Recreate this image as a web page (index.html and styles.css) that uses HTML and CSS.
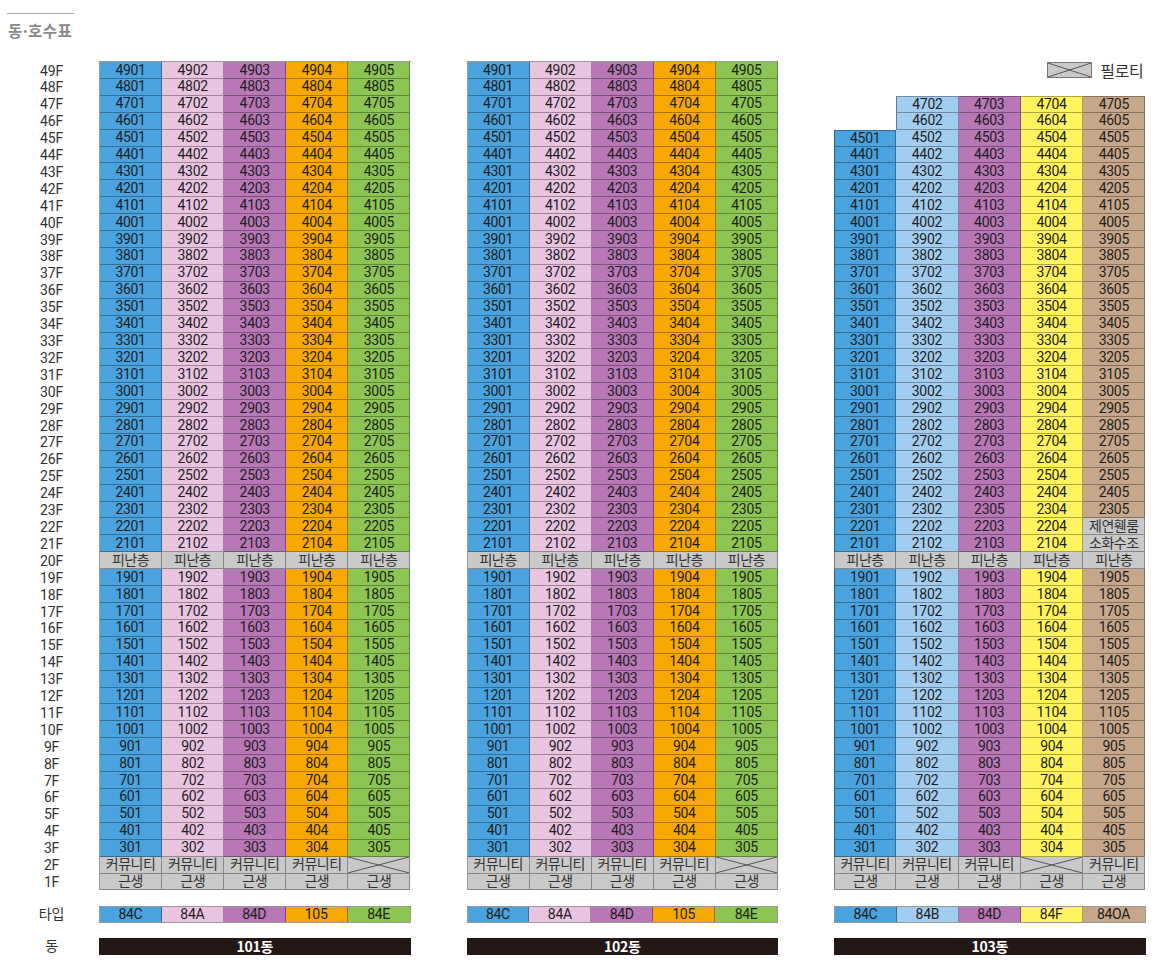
FILE: index.html
```html
<!DOCTYPE html>
<html lang="ko">
<head>
<meta charset="utf-8">
<title>동·호수표</title>
<link rel="stylesheet" href="styles.css">
</head>
<body>
<header class="title">
  <span class="rule"></span>
  <h1>동·호수표</h1>
</header>
<main class="chart">
  <section class="band floors">
    <div class="labels" id="floor-labels"></div>
    <div class="col bldg framed" id="b101"></div>
    <div class="col bldg framed" id="b102"></div>
    <div class="col bldg" id="b103"></div>
  </section>
  <section class="band types">
    <div class="label">타입</div>
    <div class="col strip">
      <div class="tcell blue">84C</div><div class="tcell pink">84A</div><div class="tcell purple">84D</div><div class="tcell orange">105</div><div class="tcell green">84E</div>
    </div>
    <div class="col strip">
      <div class="tcell blue">84C</div><div class="tcell pink">84A</div><div class="tcell purple">84D</div><div class="tcell orange">105</div><div class="tcell green">84E</div>
    </div>
    <div class="col strip">
      <div class="tcell blue">84C</div><div class="tcell sky">84B</div><div class="tcell purple">84D</div><div class="tcell yellow">84F</div><div class="tcell tan">84OA</div>
    </div>
  </section>
  <section class="band dongs">
    <div class="label">동</div>
    <div class="col dong">101동</div>
    <div class="col dong">102동</div>
    <div class="col dong">103동</div>
  </section>
</main>
<script src="script.js"></script>
</body>
</html>
```

FILE: styles.css
```css
* { box-sizing: border-box; }
html, body { margin: 0; padding: 0; background: #fff; }
body {
  width: 1160px;
  height: 960px;
  font-family: "Noto Sans CJK KR", "Noto Sans", sans-serif;
  color: #222;
  overflow: hidden;
}
.title {
  height: 61px;
  padding: 13px 0 0 7px;
}
.rule {
  display: block;
  width: 67px;
  height: 1px;
  background: #a8a8a8;
}
.title h1 {
  margin: 6px 0 0 1px;
  font-size: 15.5px;
  line-height: 20px;
  font-weight: 700;
  color: #8a8a8a;
  letter-spacing: 0.4px;
}
.band {
  display: flex;
  align-items: flex-start;
}
.labels, .label {
  width: 99px;
  flex: none;
}
.col {
  width: 311.5px;
  flex: none;
}
.col + .col { margin-left: 56px; }
.labels {
  display: grid;
  grid-template-rows: repeat(49, 16.92px);
  padding-top: 1.5px;
}
.lab, .label {
  font-family: Roboto, "Noto Sans CJK KR", sans-serif;
  font-size: 14px;
  line-height: 16.92px;
  text-align: center;
  padding-left: 4px;
  color: #333;
  letter-spacing: -0.2px;
}
.bldg {
  display: grid;
  grid-template-columns: repeat(5, 1fr);
  grid-template-rows: repeat(49, 16.92px);
}
.bldg.framed {
  border-top: 1px solid rgba(0,0,0,0.4);
  border-left: 1px solid rgba(0,0,0,0.4);
}
#b103 { padding-top: 1px; }
.cell {
  position: relative;
  padding-top: 0.5px;
  border-right: 1px solid rgba(0,0,0,0.32);
  border-bottom: 1px solid rgba(0,0,0,0.32);
  font-family: Roboto, "Noto Sans CJK KR", sans-serif;
  font-size: 14px;
  line-height: 15.4px;
  text-align: center;
  letter-spacing: -0.3px;
  color: #1e1e1e;
  white-space: nowrap;
}
.cell.t { border-top: 1px solid rgba(0,0,0,0.32); }
.cell.l { border-left: 1px solid rgba(0,0,0,0.4); }
.cell.empty { border: 0; background: transparent; }
.blue { background: #4aa3de; }
.pink { background: #e9c4e1; }
.purple { background: #b877b6; }
.orange { background: #f8a800; }
.green { background: #8cc553; }
.sky { background: #a3cdf0; }
.yellow { background: #fff45e; }
.tan { background: #c7a78b; }
.gray { background: #c9c9c9; color: #333; letter-spacing: -0.5px; }
.xmark {
  position: absolute;
  inset: 0;
  width: 100%;
  height: 100%;
}
.xmark line { stroke: #555; stroke-width: 1; }
.legend {
  grid-column: 1 / -1;
  justify-self: end;
  display: flex;
  align-items: center;
  gap: 8px;
  margin-right: 2px;
}
.legend-box {
  position: relative;
  width: 45px;
  height: 16px;
  background: #c9c9c9;
  border: 1px solid #777;
}
.legend-text {
  font-size: 16px;
  line-height: 17px;
  color: #333;
  letter-spacing: -0.3px;
}
.types { margin-top: 15px; }
.strip {
  display: grid;
  grid-template-columns: repeat(5, 1fr);
  border: 1px solid rgba(0,0,0,0.4);
  height: 17px;
}
.tcell {
  border-right: 1px solid rgba(0,0,0,0.32);
  font-family: Roboto, "Noto Sans CJK KR", sans-serif;
  font-size: 14px;
  line-height: 15.5px;
  text-align: center;
  letter-spacing: -0.3px;
  color: #1e1e1e;
}
.tcell:last-child { border-right: 0; }
.types .label { line-height: 17px; }
.dongs { margin-top: 15px; }
.dongs .label { line-height: 17px; }
.dong {
  height: 17px;
  background: #231815;
  color: #fff;
  font-size: 14px;
  font-weight: 700;
  line-height: 17px;
  text-align: center;
  letter-spacing: -0.3px;
}
```

FILE: script.js
```js
(function () {
  var XSVG = '<svg class="xmark" viewBox="0 0 100 100" preserveAspectRatio="none"><line x1="0" y1="0" x2="100" y2="100" vector-effect="non-scaling-stroke"/><line x1="0" y1="100" x2="100" y2="0" vector-effect="non-scaling-stroke"/></svg>';
  var palettes = {
    b101: ['blue', 'pink', 'purple', 'orange', 'green'],
    b102: ['blue', 'pink', 'purple', 'orange', 'green'],
    b103: ['blue', 'sky', 'purple', 'yellow', 'tan']
  };

  var labels = document.getElementById('floor-labels');
  for (var f = 49; f >= 1; f--) {
    var d = document.createElement('div');
    d.className = 'lab';
    d.textContent = f + 'F';
    labels.appendChild(d);
  }

  function cell(cls, text) {
    var c = document.createElement('div');
    c.className = 'cell ' + cls;
    if (text === 'X') {
      c.innerHTML = XSVG;
    } else if (text) {
      c.textContent = text;
    }
    return c;
  }

  ['b101', 'b102', 'b103'].forEach(function (id) {
    var el = document.getElementById(id);
    var pal = palettes[id];
    var is103 = id === 'b103';
    for (var f = 49; f >= 1; f--) {
      if (is103 && f === 49) {
        var lg = document.createElement('div');
        lg.className = 'legend';
        lg.innerHTML = '<span class="legend-box">' + XSVG + '</span><span class="legend-text">필로티</span>';
        el.appendChild(lg);
        continue;
      }
      for (var c = 1; c <= 5; c++) {
        var extra = '';
        if (is103) {
          if (f === 48 || ((f === 47 || f === 46) && c === 1)) {
            el.appendChild(cell('empty', ''));
            continue;
          }
          if ((f === 47 && c >= 2) || (f === 45 && c === 1)) extra += ' t';
          if (c === 1 || ((f === 47 || f === 46) && c === 2)) extra += ' l';
        }
        var cls, text;
        if (f === 20) { cls = 'gray'; text = '피난층'; }
        else if (f === 1) { cls = 'gray'; text = '근생'; }
        else if (f === 2) {
          var xcol = is103 ? 4 : 5;
          cls = 'gray';
          text = (c === xcol) ? 'X' : '커뮤니티';
        }
        else if (is103 && c === 5 && f === 22) { cls = 'gray'; text = '제연휀룸'; }
        else if (is103 && c === 5 && f === 21) { cls = 'gray'; text = '소화수조'; }
        else if (is103 && c === 3 && f === 23) { cls = pal[2]; text = '2305'; }
        else { cls = pal[c - 1]; text = String(f * 100 + c); }
        el.appendChild(cell(cls + extra, text));
      }
    }
  });
})();
```
